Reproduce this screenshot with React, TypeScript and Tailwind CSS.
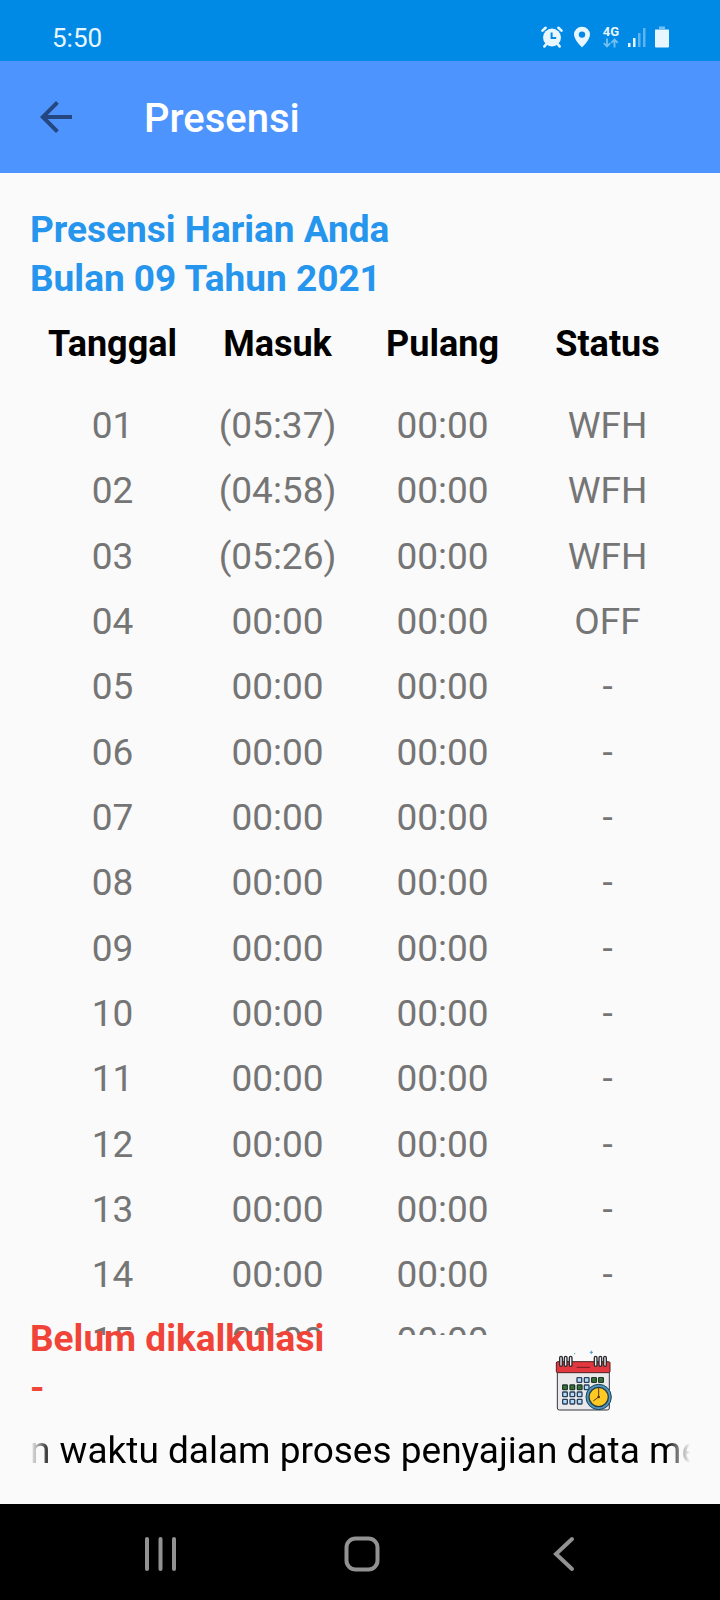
type Attendance = {
  date: string;
  masuk: string;
  pulang: string;
  status: string;
};

const filled: Attendance[] = [
  { date: "01", masuk: "(05:37)", pulang: "00:00", status: "WFH" },
  { date: "02", masuk: "(04:58)", pulang: "00:00", status: "WFH" },
  { date: "03", masuk: "(05:26)", pulang: "00:00", status: "WFH" },
  { date: "04", masuk: "00:00", pulang: "00:00", status: "OFF" },
];

const rows: Attendance[] = [
  ...filled,
  ...Array.from({ length: 11 }, (_, i) => ({
    date: String(i + 5).padStart(2, "0"),
    masuk: "00:00",
    pulang: "00:00",
    status: "-",
  })),
];

const columns = ["Tanggal", "Masuk", "Pulang", "Status"];

function StatusBar() {
  return (
    <div className="flex h-[61px] shrink-0 items-center justify-between bg-[#008ae6] pt-[14px] pr-[51px] pl-[52px] text-[#e8f6ff]">
      <span className="text-[26px] leading-8">5:50</span>
      <div className="flex items-center pb-0.5" aria-hidden="true">
        <svg width="22" height="22" viewBox="0 0 22 22" className="mr-2.5">
          <g fill="none" stroke="currentColor" strokeWidth="2.6" strokeLinecap="round">
            <path d="M1.5 4.6 4.6 1.8M20.5 4.6 17.4 1.8M5 18.5 3.4 20.4M17 18.5l1.6 1.9" />
          </g>
          <circle cx="11" cy="11.5" r="9" fill="currentColor" />
          <path d="M10.6 6.5v5.6h4.6" fill="none" stroke="#008ae6" strokeWidth="2" />
        </svg>
        <svg width="18" height="22" viewBox="0 0 18 22" className="mr-3">
          <path
            fill="currentColor"
            fillRule="evenodd"
            d="M9 .8A7.9 7.9 0 0 0 1 8.600c0 5.400 8 12.800 8 12.800s8-7.400 8-12.800A7.900 7.900 0 0 0 9 .8Zm0 4.600a3.200 3.200 0 1 1 0 6.400 3.200 3.200 0 0 1 0-6.400Z"
          />
        </svg>
        <div className="mr-2 flex w-4 flex-col items-center">
          <span className="text-[13px] leading-3 font-bold">4G</span>
          <svg width="16" height="10" viewBox="0 0 16 10" className="opacity-50">
            <path
              d="M4 .5v8M.8 5.200 4 8.500l3.200-3.300M11.500 9.500v-8M8.300 4.800l3.200-3.300 3.200 3.300"
              fill="none"
              stroke="currentColor"
              strokeWidth="1.8"
            />
          </svg>
        </div>
        <svg width="20" height="22" viewBox="0 0 20 22" className="mr-2">
          <g fill="currentColor">
            <rect x="1" y="17" width="2.500" height="4" />
            <rect x="6" y="12" width="2.500" height="9" />
            <rect x="11" y="7" width="2.500" height="14" opacity=".4" />
            <rect x="16" y="2" width="2.500" height="19" opacity=".4" />
          </g>
        </svg>
        <svg width="14" height="22" viewBox="0 0 14 22">
          <path d="M4 .5h6V3h4v2H0V3h4Z" fill="currentColor" opacity=".5" />
          <rect y="4" width="14" height="17.500" rx="1" fill="currentColor" />
        </svg>
      </div>
    </div>
  );
}

function AppBar() {
  return (
    <header className="flex h-28 shrink-0 items-center bg-[#4d94ff] pl-8">
      <button type="button" aria-label="Kembali" className="text-[#24477f]">
        <svg width="48" height="48" viewBox="0 0 24 24" fill="currentColor">
          <path d="M20 11H7.830l5.590-5.590L12 4l-8 8 8 8 1.410-1.410L7.830 13H20z" />
        </svg>
      </button>
      <h1 className="ml-16 pt-1 text-[40px] leading-[48px] font-medium text-white">
        Presensi
      </h1>
    </header>
  );
}

const blueDays = [
  [118, 120], [140, 120],
  [140, 142],
  [75, 163], [97, 163], [119, 163],
  [75, 185], [97, 185], [119, 185],
];

const greenDays = [
  [162, 120], [183, 120],
  [75, 142], [97, 142], [119, 142],
];

function CalendarIcon() {
  return (
    <svg width="58" height="62" viewBox="45 30 174 186" aria-hidden="true">
      <path d="M52 92h156v112a6 6 0 0 1-6 6H58a6 6 0 0 1-6-6Z" fill="#e9e9ec" stroke="#37383f" strokeWidth="3" />
      <rect x="49" y="65" width="161" height="33" rx="4" fill="#e2373f" stroke="#4d2024" strokeWidth="3" />
      <path d="M110 82h40" stroke="#701e24" strokeWidth="3" />
      {[63, 77, 92, 167, 181, 195].map((x) => (
        <rect key={x} x={x - 4} y="49" width="8" height="30" rx="4" fill="#eee" stroke="#2b2b30" strokeWidth="4" />
      ))}
      {blueDays.map(([x, y]) => (
        <rect key={`${x}-${y}`} x={x - 7} y={y - 7} width="14" height="14" rx="2" fill="#b4dcf8" stroke="#293e59" strokeWidth="4" />
      ))}
      {greenDays.map(([x, y]) => (
        <g key={`${x}-${y}`}>
          <rect x={x - 7} y={y - 7} width="14" height="14" rx="2" fill="#438447" stroke="#1d3824" strokeWidth="4" />
          <path d={`M${x - 4} ${y}l3 3 5-6`} fill="none" stroke="#193620" strokeWidth="2" />
        </g>
      ))}
      <circle cx="176" cy="171" r="38" fill="#4d96bd" stroke="#1f3e57" strokeWidth="3" />
      <circle cx="176" cy="171" r="29" fill="#fdc922" stroke="#263b49" strokeWidth="4" />
      <path d="M176 145v26l-15 11" fill="none" stroke="#5b3a12" strokeWidth="3" strokeLinecap="round" />
      <circle cx="176" cy="171" r="4" fill="#5b3a12" />
      <path d="M154 32v10M149 37h10" stroke="#4c9ac8" strokeWidth="3" />
      <circle cx="104" cy="41" r="2" fill="#4fb0a0" />
      <circle cx="140" cy="48" r="1" fill="#e6c86a" />
    </svg>
  );
}

function NavBar() {
  return (
    <nav className="flex h-24 shrink-0 items-center justify-between bg-black pt-1 pr-[138px] pl-[142px] text-[#929292]">
      <button type="button" aria-label="Aplikasi terbaru">
        <svg width="36" height="36" viewBox="0 0 36 36" stroke="currentColor" strokeWidth="4" strokeLinecap="round">
          <path d="M5 3v30M18.500 3v30M32 3v30" />
        </svg>
      </button>
      <button type="button" aria-label="Beranda">
        <svg width="36" height="36" viewBox="0 0 36 36" fill="none" stroke="currentColor" strokeWidth="4">
          <rect x="2.500" y="2.500" width="31" height="31" rx="9" />
        </svg>
      </button>
      <button type="button" aria-label="Kembali ke layar sebelumnya">
        <svg width="36" height="36" viewBox="0 0 36 36" fill="none" stroke="currentColor" strokeWidth="4" strokeLinecap="round">
          <path d="M26 3 10 18l16 15" />
        </svg>
      </button>
    </nav>
  );
}

export default function App() {
  return (
    <div className="flex h-screen flex-col bg-[#fafafa] font-[Roboto,sans-serif] text-[37px] leading-[49px]">
      <StatusBar />
      <AppBar />

      <main className="flex min-h-0 flex-1 flex-col px-[30px] pt-8">
        <h2 className="font-bold text-[#2695ee]">
          Presensi Harian Anda
          <br />
          Bulan 09 Tahun 2021
        </h2>

        <div className="min-h-0 flex-1 overflow-hidden">
          <table className="h-[1070px] w-full table-fixed text-center">
            <thead className="text-[36px]">
              <tr className="h-[90px] text-black">
                {columns.map((name) => (
                  <th key={name} scope="col" className="p-0 pb-2 font-bold">
                    {name}
                  </th>
                ))}
              </tr>
            </thead>
            <tbody className="text-[#757575]">
              {rows.map((row) => (
                <tr key={row.date}>
                  <td className="p-0">{row.date}</td>
                  <td className="p-0">{row.masuk}</td>
                  <td className="p-0">{row.pulang}</td>
                  <td className="p-0">{row.status}</td>
                </tr>
              ))}
            </tbody>
          </table>
        </div>

        {/* summary sits over the cut-off end of the list */}
        <footer className="z-10 -mt-[21px] shrink-0 pb-[29px]">
          <div className="flex items-end justify-between pr-[77px]">
            <p className="font-bold text-[#f04438]">
              Belum dikalkulasi
              <br />-
            </p>
            <CalendarIcon />
          </div>
          <p className="mt-3.5 overflow-hidden whitespace-nowrap text-black [mask-image:linear-gradient(to_right,transparent,black_22px,black_calc(100%-24px),transparent)]">
            n waktu dalam proses penyajian data me
          </p>
        </footer>
      </main>

      <NavBar />
    </div>
  );
}
